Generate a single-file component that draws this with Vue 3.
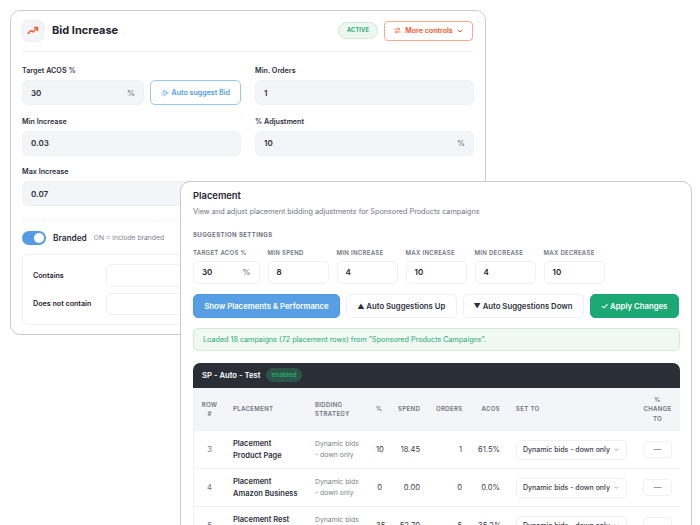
<script setup>
const settings = [
  { label: 'TARGET ACOS %', value: '30', unit: '%' },
  { label: 'MIN SPEND', value: '8' },
  { label: 'MIN INCREASE', value: '4' },
  { label: 'MAX INCREASE', value: '10' },
  { label: 'MIN DECREASE', value: '4' },
  { label: 'MAX DECREASE', value: '10' }
]

const rows = [
  { row: 3, name: ['Placement', 'Product Page'], pct: 10, spend: '18.45', orders: 1, acos: '61.5%' },
  { row: 4, name: ['Placement', 'Amazon Business'], pct: 0, spend: '0.00', orders: 0, acos: '0.0%' },
  { row: 5, name: ['Placement Rest', 'Of Search'], pct: 35, spend: '52.70', orders: 5, acos: '35.2%' }
]
</script>

<template>
  <div class="stage">
    <section class="card bid-card">
      <header class="bid-head">
        <div class="bid-icon">
          <svg width="12" height="9" viewBox="0 0 24 18" fill="none" stroke="#f4552b" stroke-width="2.8" stroke-linecap="round" stroke-linejoin="round">
            <path d="M2 15l6-6 4 3 9-9" />
            <path d="M15 3h6v6" />
          </svg>
        </div>
        <h2>Bid Increase</h2>
        <span class="active-pill">ACTIVE</span>
        <button class="more-btn">
          <svg width="7" height="7" viewBox="0 0 24 24" fill="none" stroke="#f4552b" stroke-width="2.6" stroke-linecap="round" stroke-linejoin="round">
            <path d="M3 7h16M15 3l4 4-4 4M21 17H5M9 13l-4 4 4 4" />
          </svg>
          More controls
          <svg width="6" height="6" viewBox="0 0 24 24" fill="none" stroke="#f4552b" stroke-width="4" stroke-linecap="round" stroke-linejoin="round">
            <path d="M4 8l8 8 8-8" />
          </svg>
        </button>
      </header>

      <div class="bid-grid">
        <div class="field">
          <label>Target ACOS %</label>
          <div class="acos-row">
            <div class="input"><span>30</span><i>%</i></div>
            <button class="suggest-btn">
              <svg width="8" height="8" viewBox="0 0 24 24" fill="none" stroke="#4f9be6" stroke-width="2" stroke-linecap="round">
                <path d="M10 3v5M10 16v5M2 12h5M13 12h9M4 5l4 4M4 19l4-4M15 6l3 6-3 6" />
              </svg>
              Auto suggest Bid
            </button>
          </div>
        </div>
        <div class="field">
          <label>Min. Orders</label>
          <div class="input"><span>1</span></div>
        </div>
        <div class="field">
          <label>Min Increase</label>
          <div class="input"><span>0.03</span></div>
        </div>
        <div class="field">
          <label>% Adjustment</label>
          <div class="input"><span>10</span><i>%</i></div>
        </div>
        <div class="field">
          <label>Max Increase</label>
          <div class="input"><span>0.07</span></div>
        </div>
      </div>

      <div class="branded">
        <div class="switch"><b></b></div>
        <strong>Branded</strong>
        <small>ON = include branded</small>
      </div>

      <div class="terms">
        <div class="term-row"><span>Contains</span><div class="term-input"></div></div>
        <div class="term-row"><span>Does not contain</span><div class="term-input"></div></div>
      </div>
    </section>

    <section class="card placement-card">
      <h2>Placement</h2>
      <p class="sub">View and adjust placement bidding adjustments for Sponsored Products campaigns</p>

      <h4>SUGGESTION SETTINGS</h4>
      <div class="settings">
        <div v-for="s in settings" :key="s.label" class="setting">
          <label>{{ s.label }}</label>
          <div class="setting-input"><span>{{ s.value }}</span><i v-if="s.unit">{{ s.unit }}</i></div>
        </div>
      </div>

      <div class="actions">
        <button class="btn blue">Show Placements &amp; Performance</button>
        <button class="btn plain up"><small>▲</small> Auto Suggestions Up</button>
        <button class="btn plain down"><small>▼</small> Auto Suggestions Down</button>
        <button class="btn green"><small class="tick">✓</small> Apply Changes</button>
      </div>

      <div class="notice">Loaded 18 campaigns (72 placement rows) from "Sponsored Products Campaigns".</div>

      <div class="table-wrap">
        <div class="table-title">
          <span>SP - Auto - Test</span>
          <em>enabled</em>
        </div>
        <table>
          <colgroup>
            <col class="w-row" />
            <col class="w-place" />
            <col class="w-strat" />
            <col class="w-pct" />
            <col class="w-spend" />
            <col class="w-orders" />
            <col class="w-acos" />
            <col class="w-set" />
            <col class="w-change" />
          </colgroup>
          <thead>
            <tr>
              <th class="center">ROW<br />#</th>
              <th>PLACEMENT</th>
              <th>BIDDING<br />STRATEGY</th>
              <th class="num">%</th>
              <th class="num">SPEND</th>
              <th class="num">ORDERS</th>
              <th class="num">ACOS</th>
              <th>SET TO</th>
              <th class="center">%<br />CHANGE<br />TO</th>
            </tr>
          </thead>
          <tbody>
            <tr v-for="r in rows" :key="r.row">
              <td class="center muted">{{ r.row }}</td>
              <td class="name">{{ r.name[0] }}<br />{{ r.name[1] }}</td>
              <td class="strat">Dynamic bids<br />- down only</td>
              <td class="num">{{ r.pct }}</td>
              <td class="num">{{ r.spend }}</td>
              <td class="num">{{ r.orders }}</td>
              <td class="num">{{ r.acos }}</td>
              <td>
                <div class="select">
                  <span>Dynamic bids - down only</span>
                  <svg width="5" height="5" viewBox="0 0 24 24" fill="none" stroke="#8b909a" stroke-width="4"><path d="M4 8l8 8 8-8" /></svg>
                </div>
              </td>
              <td><div class="dash">—</div></td>
            </tr>
          </tbody>
        </table>
      </div>
    </section>
  </div>
</template>

<style>
html, body { margin: 0; background: #fff; }
</style>

<style scoped>
.stage {
  position: relative;
  width: 700px;
  height: 525px;
  overflow: hidden;
  font-family: Inter, "Liberation Sans", sans-serif;
  color: #1f2430;
  background: #fff;
}

.card {
  position: absolute;
  box-sizing: border-box;
  background: #fff;
  border: 1px solid #c9cacd;
  border-radius: 10px;
}

.bid-card {
  left: 10px;
  top: 10px;
  width: 476px;
  height: 325px;
  padding: 8px 12px 0 11px;
}

.bid-head {
  display: flex;
  align-items: center;
  box-sizing: border-box;
  height: 33px;
  border-bottom: 1px solid #eff0f3;
}

.bid-icon {
  width: 22px;
  height: 22px;
  border-radius: 6px;
  background: #f4f5f8;
  border: 1px solid #eceef2;
  box-sizing: border-box;
  display: flex;
  align-items: center;
  justify-content: center;
  margin-bottom: 9px;
}

.bid-head h2 {
  margin: 0 auto 10px 8px;
  font-size: 11px;
  font-weight: 700;
}

.active-pill {
  width: 40px;
  height: 17px;
  line-height: 15px;
  box-sizing: border-box;
  text-align: center;
  margin: 0 6px 9px 0;
  font-size: 5.6px;
  font-weight: 700;
  letter-spacing: 0.2px;
  color: #29a873;
  background: #edf7f2;
  border: 1px solid #cfe8dc;
  border-radius: 9px;
}

.more-btn {
  display: flex;
  align-items: center;
  justify-content: center;
  gap: 4.5px;
  width: 89px;
  height: 20px;
  box-sizing: border-box;
  padding: 0;
  margin-bottom: 9px;
  background: #fff;
  border: 1px solid #f9a78f;
  border-radius: 4px;
  color: #f4552b;
  font: 600 7.1px Inter, sans-serif;
}

.bid-grid {
  display: grid;
  grid-template-columns: 219px 219px;
  column-gap: 14px;
  margin-top: 14px;
}

.field {
  height: 50.5px;
}

.field label {
  display: block;
  font-size: 7.2px;
  font-weight: 600;
  line-height: 10px;
  margin-bottom: 4px;
  color: #2b303b;
}

.input {
  flex: 1;
  display: flex;
  align-items: center;
  justify-content: space-between;
  box-sizing: border-box;
  height: 25px;
  padding: 0 8px;
  background: #f4f5f8;
  border: 1px solid #eff0f3;
  border-radius: 6px;
  font-size: 8px;
  font-weight: 600;
  color: #2b303b;
}

.input i {
  font-style: normal;
  font-weight: 500;
  color: #6f7480;
}

.acos-row {
  display: flex;
  gap: 6px;
}

.suggest-btn {
  display: flex;
  align-items: center;
  gap: 3px;
  box-sizing: border-box;
  width: 91px;
  height: 25px;
  padding: 0 0 0 9.5px;
  background: #fff;
  border: 1px solid #9cc8f1;
  border-radius: 5px;
  color: #4f9be6;
  font: 600 7.1px Inter, sans-serif;
  white-space: nowrap;
}

.branded {
  display: flex;
  align-items: center;
  height: 33px;
  margin-top: 2.5px;
  border-top: 1px dashed #eff0f3;
}

.switch {
  width: 23.5px;
  height: 14px;
  border-radius: 7px;
  background: #559be4;
  position: relative;
}

.switch b {
  position: absolute;
  right: 2px;
  top: 2px;
  width: 10px;
  height: 10px;
  border-radius: 50%;
  background: #fff;
}

.branded strong {
  margin-left: 7.5px;
  font-size: 8.3px;
  font-weight: 600;
  color: #2b303b;
}

.branded small {
  margin-left: 7px;
  font-size: 6.75px;
  color: #7a7f8a;
}

.terms {
  box-sizing: border-box;
  height: 71px;
  padding: 9px 10px;
  border: 1px solid #eff0f3;
  border-radius: 6px;
}

.term-row {
  display: flex;
  align-items: center;
  height: 22.5px;
  margin-bottom: 6px;
  font-size: 7.15px;
  font-weight: 600;
}

.term-row span {
  width: 73px;
}

.term-input {
  flex: 1;
  height: 22.5px;
  box-sizing: border-box;
  border: 1px solid #eff0f3;
  border-radius: 5px;
}

.placement-card {
  left: 180px;
  top: 181px;
  width: 512px;
  height: 360px;
  padding: 7px 11px 0 12px;
}

.placement-card h2 {
  margin: 0;
  font-size: 9.4px;
  font-weight: 600;
  line-height: 13px;
}

.sub {
  margin: 4px 0 0;
  font-size: 7.25px;
  line-height: 11px;
  color: #6f7480;
}

.placement-card h4 {
  margin: 12.5px 0 0;
  font-size: 6.05px;
  font-weight: 700;
  line-height: 9px;
  letter-spacing: 0.4px;
  color: #6f7480;
}

.settings {
  display: flex;
  gap: 8px;
  margin-top: 9px;
}

.setting {
  width: 61px;
}

.setting:first-child {
  width: 66.5px;
}

.setting label {
  display: block;
  font-size: 6px;
  font-weight: 600;
  line-height: 9px;
  letter-spacing: 0.3px;
  margin-bottom: 4px;
  color: #6f7480;
  white-space: nowrap;
}

.setting-input {
  display: flex;
  align-items: center;
  justify-content: space-between;
  box-sizing: border-box;
  height: 23px;
  padding: 0 8px;
  border: 1px solid #eff0f3;
  border-radius: 5px;
  font-size: 8px;
  font-weight: 600;
}

.setting-input i {
  font-style: normal;
  font-weight: 500;
  color: #6f7480;
}

.actions {
  display: flex;
  gap: 6px;
  margin-top: 10.5px;
}

.btn {
  box-sizing: border-box;
  height: 23.5px;
  padding: 0;
  border-radius: 5px;
  font: 600 7.75px Inter, sans-serif;
  white-space: nowrap;
}

.btn small {
  font-size: 7px;
}

.btn small.tick {
  font-size: 8.5px;
}

.blue {
  width: 147px;
  background: #579fe4;
  border: 1px solid #4f97dd;
  color: #fff;
}

.plain {
  background: #fff;
  border: 1px solid #eff0f3;
  color: #2b303b;
}

.up { width: 110.5px; }
.down { width: 121px; }

.green {
  width: 89px;
  background: #1ca875;
  border: 1px solid #1ca875;
  color: #fff;
}

.notice {
  box-sizing: border-box;
  height: 23px;
  line-height: 21px;
  margin-top: 10px;
  padding: 0 9px;
  background: #eff8f3;
  border: 1px solid #d3e9de;
  border-radius: 5px;
  color: #2aa873;
  font-size: 7.2px;
}

.table-wrap {
  width: 487px;
  margin-top: 12px;
  border-radius: 7px 7px 0 0;
  overflow: hidden;
}

.table-title {
  display: flex;
  align-items: center;
  gap: 6px;
  height: 25.5px;
  padding: 0 9px;
  background: #2a2e37;
  color: #fff;
  font-size: 7.7px;
  font-weight: 600;
}

.table-title em {
  font-style: normal;
  font-size: 6.5px;
  font-weight: 600;
  height: 14px;
  line-height: 14px;
  padding: 0 5px;
  border-radius: 7px;
  background: #2c5446;
  color: #25a870;
}

table {
  width: 487px;
  table-layout: fixed;
  border-collapse: collapse;
  border: 1px solid #eff0f3;
  border-top: 0;
}

.w-row { width: 31.5px; }
.w-place { width: 82px; }
.w-strat { width: 61px; }
.w-pct { width: 22px; }
.w-spend { width: 38px; }
.w-orders { width: 42px; }
.w-acos { width: 38px; }
.w-set { width: 127px; }
.w-change { width: 45.5px; }

th, td {
  padding: 0 8px;
  border-bottom: 1px solid #eff0f3;
}

th {
  height: 42px;
  background: #f4f5f8;
  text-align: left;
  font-size: 6.1px;
  font-weight: 600;
  line-height: 9.5px;
  letter-spacing: 0.3px;
  color: #6f7480;
}

td {
  height: 37px;
  font-size: 7.6px;
  color: #3b404b;
}

th.center, td.center {
  padding: 0;
  text-align: center;
}

th.num, td.num {
  text-align: right;
}

.muted { color: #6f7480; }

td.name {
  padding-right: 0;
  font-size: 7.5px;
  font-weight: 600;
  line-height: 12px;
  color: #2b303b;
}

td.strat {
  padding-right: 0;
  font-size: 6.85px;
  line-height: 10.5px;
  color: #7a7f8a;
}

.select {
  display: flex;
  align-items: center;
  justify-content: space-between;
  box-sizing: border-box;
  width: 111px;
  height: 20px;
  padding: 0 7px 0 6px;
  border: 1px solid #eff0f3;
  border-radius: 5px;
  font-size: 7px;
  font-weight: 500;
  color: #3b404b;
  white-space: nowrap;
}

.dash {
  box-sizing: border-box;
  width: 29px;
  height: 16.5px;
  line-height: 14.5px;
  text-align: center;
  border: 1px solid #eff0f3;
  border-radius: 4px;
  color: #6f7480;
  font-size: 8px;
}
</style>
